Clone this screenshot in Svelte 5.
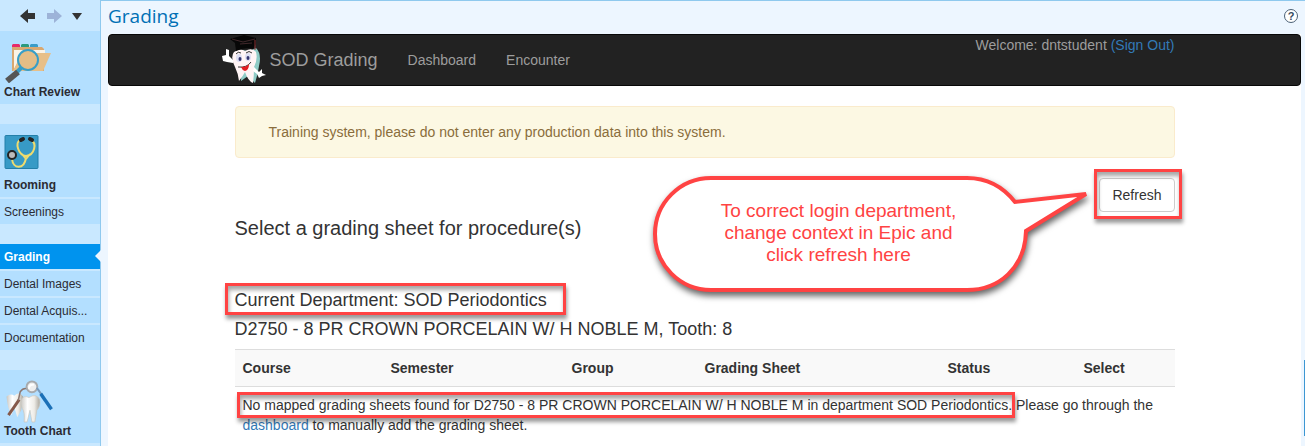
<script>
	let appTitle = 'SOD Grading';
	let username = 'dntstudent';
	let department = 'SOD Periodontics';
	let procedure = 'D2750 - 8 PR CROWN PORCELAIN W/ H NOBLE M';
	let tooth = 8;
	let current = 'Grading';

	let columns = [
		{ name: 'Course', width: 148 },
		{ name: 'Semester', width: 181 },
		{ name: 'Group', width: 133 },
		{ name: 'Grading Sheet', width: 243 },
		{ name: 'Status', width: 136 },
		{ name: 'Select', width: 99 }
	];
	$: total = columns.reduce((sum, col) => sum + col.width, 0);

	let activities = [
		{ items: ['Chart Review'], icon: 'chart' },
		{ items: ['Rooming', 'Screenings'], icon: 'rooming' },
		{ items: ['Grading', 'Dental Images', 'Dental Acquis...', 'Documentation'] },
		{ items: ['Tooth Chart'], icon: 'tooth' }
	];

	function refresh() {
		location.reload();
	}
</script>

<div class="app">
	<aside>
		<div class="history">
			<button type="button" aria-label="Back">
				<svg width="16" height="16" viewBox="0 0 16 16"><path d="M0 8 8 1V5H15V11H8V15Z" fill="#333" /></svg>
			</button>
			<button type="button" aria-label="Forward">
				<svg width="16" height="16" viewBox="0 0 16 16"><path d="M16 8 8 1V5H1V11H8V15Z" fill="#9db3d8" /></svg>
			</button>
			<button type="button" aria-label="More">
				<svg width="10" height="16" viewBox="0 0 10 16"><path d="M0 5H10L5 12Z" fill="#333" /></svg>
			</button>
		</div>
		<nav class="activities" aria-label="Activities">
			{#each activities as group}
				<div class="group">
					{#each group.items as item, i}
						<a href="#top" class:active={item === current} class:large={group.icon && i === 0}>
							{#if i === 0 && group.icon === 'chart'}
								<svg width="48" height="42" viewBox="0 0 48 42">
									<path d="M8 6V4L9 3H15L16 4V6Z" fill="#e62a6b" />
									<path d="M17 6V4L18 3H24L25 4V6Z" fill="#2a9a80" />
									<path d="M26 6V4L27 3H33L34 4V6Z" fill="#3a9cc8" />
									<path d="M8 6H38L40 8V30H8Z" fill="#d9a871" />
									<path d="M10 9H41V13H19L10 28Z" fill="#faf3e6" />
									<path d="M18 12H47L39 30H9Z" fill="#e7bf88" />
									<path d="M18 26 12 32" stroke="#379ec8" stroke-width="4" />
									<circle cx="24" cy="19" r="10" fill="#e5bd86" stroke="#379ec8" stroke-width="2" />
									<path d="M14 31 3 40" stroke="#555" stroke-width="6" />
								</svg>
							{:else if i === 0 && group.icon === 'rooming'}
								<svg width="36" height="36" viewBox="0 0 36 36">
									<rect x="1" y="1.5" width="33" height="33" rx="1" fill="#379ac6" stroke="#237fa9" />
									<path d="M16 6C11 9 14 21 22 22C31 21 33 9 27 6M18 20 22 25 26 20M22 24C20 36 9 35 8 25" fill="none" stroke="#efdc6e" stroke-width="2" />
									<path d="M17 6 19 5M26 5 28 6" stroke="#242424" stroke-width="4" stroke-linecap="round" />
									<circle cx="8" cy="21" r="4" fill="#bbb" stroke="#242424" stroke-width="2" />
								</svg>
							{:else if i === 0 && group.icon === 'tooth'}
								<svg width="50" height="44" viewBox="0 0 50 44">
									<defs>
										<linearGradient id="enamel" x1="0" x2="1">
											<stop offset="0" stop-color="#c9c7c2" />
											<stop offset="0.35" stop-color="#fff" />
											<stop offset="0.7" stop-color="#eeece7" />
											<stop offset="1" stop-color="#aaa69d" />
										</linearGradient>
									</defs>
									<path d="M2 17Q6 13 10 16Q15 11 19 17L17 31 13 38 10 28 7 36Q3 29 2 17Z" fill="url(#enamel)" />
									<path d="M4 36 15 20" stroke="#85594b" stroke-width="3" />
									<path d="M14 21 16 12Q19 8 23 9" fill="none" stroke="#8c7770" stroke-width="1.5" />
									<path d="M17 21Q19 15 25 18Q32 13 36 20Q37 27 33 31L31 43H28L26 31 23 43H20Q21 33 18 29Q16 25 17 21Z" fill="url(#enamel)" stroke="#cac7bf" stroke-width=".7" />
									<circle cx="28" cy="7" r="5.5" fill="#eee" stroke="#a7aaad" stroke-width="2" />
									<path d="M25 9Q25 4 30 5" fill="none" stroke="#fff" stroke-width="2" />
									<path d="M33 8 38 15" stroke="#7899ba" stroke-width="2" />
									<path d="M37 14 48 30" stroke="#1b70b7" stroke-width="3.5" />
								</svg>
							{/if}
							<span>{item}</span>
						</a>
					{/each}
				</div>
			{/each}
		</nav>
	</aside>

	<main id="top">
		<header class="title">
			<h1>Grading</h1>
			<button type="button" class="help" aria-label="Help">?</button>
		</header>

		<div class="page">
			<div class="navbar">
				<div class="container bar">
					<a class="brand" href="#top">
						<svg width="50" height="50" viewBox="0 0 50 50">
							<path d="M22 15Q30 17 36 13Q42 19 39 31Q38 39 35 48L28 41 21 46Q22 35 17 29Q14 19 22 15Z" fill="#8fcbc6" />
							<path d="M14 17Q20 13 25 16Q32 12 36 17Q38 24 34 32Q34 41 33 48Q28 46 25 37Q23 41 19 46Q18 38 15 32Q10 22 14 17Z" fill="#fff4f5" />
							<path d="M13 25 9 21V15L6 14V20L2 21 3 26 7 27 13 28Z" fill="#fff" />
							<path d="M34 32 39 37 42 34 42 38 46 40 42 41 39 43 37 39 33 36Z" fill="#fff" />
							<path d="M10 4 24 0 36 3 36 9 33 14Q24 12 16 16L15 8Z" fill="#070707" />
							<path d="M12 4 23 7 35 4M20 9 32 8" fill="none" stroke="#40282b" />
							<path d="M35 5V15" stroke="#8c3033" />
							<ellipse cx="19" cy="23" rx="3" ry="4" fill="#dedff3" />
							<ellipse cx="28" cy="22" rx="3" ry="4" fill="#dedff3" />
							<ellipse cx="20" cy="24" rx="1.5" ry="2" fill="#34346f" />
							<ellipse cx="28" cy="23" rx="1.5" ry="2" fill="#34346f" />
							<path d="M16 19Q18 16 21 18M26 18Q29 15 32 18M18 32Q27 33 31 27" fill="none" stroke="#333" />
							<path d="M21 32Q27 32 29 29Q29 35 25 36Q22 35 21 32Z" fill="#e31c22" />
						</svg>
						<span>{appTitle}</span>
					</a>
					<a class="link" href="#dashboard">Dashboard</a>
					<a class="link" href="#encounter">Encounter</a>
					<p class="welcome">Welcome: {username} <a href="#signout">(Sign Out)</a></p>
				</div>
			</div>

			<div class="container">
				<div class="alert" role="alert">
					Training system, please do not enter any production data into this system.
				</div>

				<div class="actions">
					<div class="marked mark-button">
						<button type="button" class="refresh" on:click={refresh}>Refresh</button>
					</div>
					<div class="callout">
						<svg width="450" height="130" viewBox="0 0 450 130" aria-hidden="true">
							<path d="M62 8H318C340 8 355 18 366 32L437 24 377 61C376 98 350 120 318 120H62A56 56 0 0 1 62 8Z" />
						</svg>
						<p>To correct login department,<br />change context in Epic and<br />click refresh here</p>
					</div>
				</div>

				<h2>Select a grading sheet for procedure(s)</h2>
				<h3><span class="marked mark-department">Current Department: {department}</span></h3>
				<h3>{procedure}, Tooth: {tooth}</h3>

				<table>
					<colgroup>
						{#each columns as col}
							<col style="width: {(col.width / total) * 100}%" />
						{/each}
					</colgroup>
					<thead>
						<tr>
							{#each columns as col}
								<th scope="col">{col.name}</th>
							{/each}
						</tr>
					</thead>
					<tbody>
						<tr>
							<td colspan={columns.length}>
								<span class="marked mark-message">No mapped grading sheets found for {procedure} in department {department}.</span>
								Please go through the <a href="#dashboard">dashboard</a> to manually add the grading sheet.
							</td>
						</tr>
					</tbody>
				</table>
			</div>
		</div>
		<div class="edge"></div>
	</main>
</div>

<style>
	:global(body) {
		margin: 0;
		overflow: hidden;
	}
	.app {
		display: grid;
		grid-template-columns: 101px 1fr;
		min-height: 100vh;
		font-family: 'Liberation Sans', Arial, sans-serif;
		font-size: 14px;
		line-height: 20px;
		color: #333;
		background: #edf6ff;
	}
	button {
		font: inherit;
		cursor: pointer;
	}
	a {
		color: #337ab7;
		text-decoration: none;
	}

	/* Activity sidebar */
	aside {
		box-sizing: border-box;
		background: #c9e8ff;
		border-right: 1px solid #8fc9ee;
	}
	.history {
		display: flex;
		align-items: center;
		gap: 10px;
		height: 31px;
		padding-left: 20px;
	}
	.history button {
		display: flex;
		padding: 0;
		border: 0;
		background: none;
	}
	.activities {
		display: flex;
		flex-direction: column;
		gap: 20px;
	}
	.group {
		display: flex;
		flex-direction: column;
		gap: 2px;
	}
	.group a {
		position: relative;
		display: flex;
		flex-direction: column;
		justify-content: center;
		height: 25px;
		padding-left: 4px;
		background: #b3dfff;
		color: #2b2b33;
		font-size: 12px;
		line-height: 16px;
	}
	.group .large {
		justify-content: space-between;
		box-sizing: border-box;
		height: 73px;
		padding: 10px 0 4px 4px;
		font-weight: bold;
	}
	.group .active {
		background: #0093ee;
		color: #fff;
		font-weight: bold;
	}
	.active::after {
		content: '';
		position: absolute;
		top: 6px;
		right: -1px;
		border: 6px solid transparent;
		border-left: 0;
		border-right-color: #edf6ff;
	}

	/* Page frame */
	main {
		position: relative;
		display: flex;
		flex-direction: column;
		padding: 0 4px 0 7px;
		border-top: 1px solid #8fc9ee;
	}
	.title {
		display: flex;
		align-items: center;
		justify-content: space-between;
		height: 33px;
	}
	h1 {
		margin: 0 0 4px;
		color: #0070b5;
		font: 500 19px/28px 'Open Sans', sans-serif;
	}
	.help {
		width: 14px;
		height: 14px;
		margin: 0 3px 4px 0;
		padding: 0;
		border: 1px solid #4b6177;
		border-radius: 50%;
		background: #fff;
		color: #34495e;
		font-size: 11px;
		font-weight: bold;
		line-height: 12px;
	}
	.page {
		flex: 1;
		background: #fff;
	}
	.edge {
		position: absolute;
		top: 359px;
		right: 0;
		width: 1px;
		height: 76px;
		background: #3c97d3;
	}
	.container {
		max-width: 940px;
		margin: 0 auto;
	}
	.navbar {
		margin-bottom: 20px;
		border: 1px solid #080808;
		border-radius: 4px;
		background: #222;
	}
	.bar {
		display: flex;
		align-items: center;
		height: 50px;
		color: #9d9d9d;
	}
	.brand {
		display: flex;
		align-items: center;
		margin: 0 15px 0 -15px;
		color: #9d9d9d;
		font-size: 18px;
	}
	.link {
		padding: 0 15px;
		color: #9d9d9d;
	}
	.welcome {
		align-self: flex-start;
		margin: 0 0 0 auto;
	}
	.alert {
		padding: 15px 33px;
		border: 1px solid #faebcc;
		border-radius: 4px;
		background: #fcf8e3;
		color: #8a6d3b;
	}
	.actions {
		position: relative;
		display: flex;
		justify-content: flex-end;
		margin-top: 20px;
	}
	.refresh {
		display: block;
		padding: 6px 12px;
		border: 1px solid #ccc;
		border-radius: 4px;
		background: #fff;
		color: #333;
	}
	h2,
	h3 {
		margin: 0;
		font-weight: normal;
	}
	h2 {
		padding: 5px 0 51px;
		font-size: 20px;
		line-height: 22px;
	}
	h3 {
		margin-bottom: 9px;
		font-size: 18px;
		line-height: 20px;
	}
	table {
		width: 100%;
		margin-top: 10px;
		border-collapse: collapse;
		table-layout: fixed;
	}
	th,
	td {
		padding: 8px;
		border-top: 1px solid #ddd;
		text-align: left;
	}
	th {
		background: #f9f9f9;
	}

	/* Red highlights and the speech bubble */
	.marked {
		position: relative;
	}
	.marked::after {
		content: '';
		position: absolute;
		border: 3px solid #ff4343;
		box-shadow: 1px 4px 4px rgba(0, 0, 0, 0.4), inset 1px 4px 4px rgba(0, 0, 0, 0.35);
		pointer-events: none;
	}
	.mark-button::after {
		inset: -9px -7px -7px -5px;
	}
	.mark-department::after {
		inset: -7px -19px -5px -10px;
	}
	.mark-message::after {
		inset: -5px -3px -5px -6px;
	}
	.callout {
		position: absolute;
		top: -8px;
		right: 76px;
	}
	.callout svg {
		display: block;
		overflow: visible;
		filter: drop-shadow(1px 4px 3px rgba(0, 0, 0, 0.6));
	}
	.callout path {
		fill: #fff;
		stroke: #ff4343;
		stroke-width: 4;
	}
	.callout p {
		position: absolute;
		top: 30px;
		left: 0;
		width: 380px;
		margin: 0;
		color: #ff4343;
		font-size: 19px;
		line-height: 22px;
		text-align: center;
	}
</style>
